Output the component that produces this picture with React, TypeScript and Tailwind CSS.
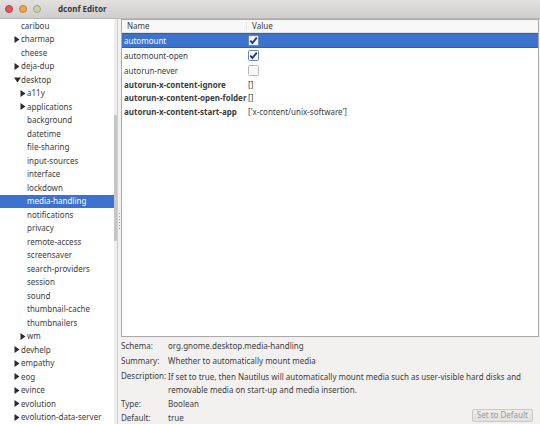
import React from "react"

type Node = { name: string; level: number; arrow?: "closed" | "open"; selected?: boolean }

const tree: Node[] = [
  { name: "caribou", level: 0 },
  { name: "charmap", level: 0, arrow: "closed" },
  { name: "cheese", level: 0 },
  { name: "deja-dup", level: 0, arrow: "closed" },
  { name: "desktop", level: 0, arrow: "open" },
  { name: "a11y", level: 1, arrow: "closed" },
  { name: "applications", level: 1, arrow: "closed" },
  { name: "background", level: 1 },
  { name: "datetime", level: 1 },
  { name: "file-sharing", level: 1 },
  { name: "input-sources", level: 1 },
  { name: "interface", level: 1 },
  { name: "lockdown", level: 1 },
  { name: "media-handling", level: 1, selected: true },
  { name: "notifications", level: 1 },
  { name: "privacy", level: 1 },
  { name: "remote-access", level: 1 },
  { name: "screensaver", level: 1 },
  { name: "search-providers", level: 1 },
  { name: "session", level: 1 },
  { name: "sound", level: 1 },
  { name: "thumbnail-cache", level: 1 },
  { name: "thumbnailers", level: 1 },
  { name: "wm", level: 1, arrow: "closed" },
  { name: "devhelp", level: 0, arrow: "closed" },
  { name: "empathy", level: 0, arrow: "closed" },
  { name: "eog", level: 0, arrow: "closed" },
  { name: "evince", level: 0, arrow: "closed" },
  { name: "evolution", level: 0, arrow: "closed" },
  { name: "evolution-data-server", level: 0, arrow: "closed" },
]

type Key = { name: string; bold?: boolean; value: React.ReactNode; tall?: boolean; selected?: boolean }

function Check({ checked, light }: { checked: boolean; light?: boolean }) {
  return (
    <svg width="11" height="11" viewBox="0 0 11 11" className="block">
      <rect x="0.5" y="0.5" width="10" height="10" rx="1" fill={light ? "#eef3fb" : "#f8f8f8"} stroke={checked ? "#6d86ad" : "#b9b9b9"} />
      {checked && <path d="M2.3 5.6 L4.4 8 L8.8 2.6" fill="none" stroke="#1f3d73" strokeWidth="1.9" />}
    </svg>
  )
}

const keys: Key[] = [
  { name: "automount", value: <Check checked light />, tall: true, selected: true },
  { name: "automount-open", value: <Check checked />, tall: true },
  { name: "autorun-never", value: <Check checked={false} />, tall: true },
  { name: "autorun-x-content-ignore", bold: true, value: "[]" },
  { name: "autorun-x-content-open-folder", bold: true, value: "[]" },
  { name: "autorun-x-content-start-app", bold: true, value: "['x-content/unix-software']" },
]

function Arrow({ kind }: { kind: "closed" | "open" }) {
  return kind === "closed" ? (
    <svg width="6" height="7" viewBox="0 0 6 7" className="block">
      <path d="M0.5 0 L5.5 3.5 L0.5 7 Z" fill="#2b2b2b" />
    </svg>
  ) : (
    <svg width="7" height="6" viewBox="0 0 7 6" className="block">
      <path d="M0 0.5 L7 0.5 L3.5 5.5 Z" fill="#2b2b2b" />
    </svg>
  )
}

export default function App() {
  return (
    <div
      className="w-[540px] h-[424px] overflow-hidden flex flex-col bg-[#f2f1f0] text-[#3c3c3c] text-[8px] leading-none"
      style={{ fontFamily: '"Noto Sans", "DejaVu Sans", sans-serif' }}
    >
      {/* title bar */}
      <div className="h-[19px] shrink-0 flex items-center bg-gradient-to-b from-[#e2e1df] to-[#cfcecc] border-b border-[#b8b7b5]">
        <div className="flex items-center gap-[6px] pl-[5px]">
          <span className="w-[8px] h-[8px] rounded-full bg-[#e2565f] border border-[#b2434a]" />
          <span className="w-[8px] h-[8px] rounded-full bg-[#f3a24a] border border-[#c8813a]" />
          <span className="w-[8px] h-[8px] rounded-full bg-[#c9d3a8] border border-[#9ba27f]" />
        </div>
        <span className="ml-[17px] font-bold text-[8px] text-[#3a3a3a]">dconf Editor</span>
      </div>

      <div className="flex-1 flex min-h-0">
        {/* schema tree */}
        <div className="w-[118px] shrink-0 flex bg-white border-r border-[#cfcecc]">
          <div className="flex-1 flex flex-col">
            {tree.map((n) => (
              <div
                key={n.name}
                className={
                  "h-[13.5px] shrink-0 flex items-center " +
                  (n.selected ? "bg-[#3d73cd] text-white" : "")
                }
                style={{ paddingLeft: 14 + n.level * 6 }}
              >
                <span className="w-[7px] shrink-0 flex items-center">
                  {n.arrow && <Arrow kind={n.arrow} />}
                </span>
                <span>{n.name}</span>
              </div>
            ))}
          </div>
          <div className="w-[3px] shrink-0 bg-[#ededed] flex flex-col">
            <div className="h-[96px]" />
            <div className="h-[126px] bg-[#c6c6c6] rounded-[1px]" />
          </div>
        </div>

        {/* pane handle */}
        <div className="w-[3px] shrink-0 flex flex-col items-center justify-center gap-[2px] pb-[2px]">
          {[0, 1, 2, 3, 4, 5].map((i) => (
            <span key={i} className="w-[1px] h-[1px] bg-[#9a9a9a]" />
          ))}
        </div>

        {/* key list + details */}
        <div className="flex-1 flex flex-col pr-[1px]">
          <div className="h-[318px] shrink-0 bg-white border border-[#a9a9a9] flex flex-col">
            <div className="h-[13px] shrink-0 flex items-center bg-[#f8f8f8] border-b border-[#e2e2e2]">
              <span className="w-[125px] pl-[5px] border-r border-[#e4e4e4]">Name</span>
              <span className="pl-[5px]">Value</span>
            </div>
            {keys.map((k) => (
              <div
                key={k.name}
                className={
                  (k.tall ? "h-[15px] " : "h-[13.5px] ") +
                  "shrink-0 flex items-center " +
                  (k.selected ? "bg-[#3d73cd] text-white border-y border-[#2e5fb3]" : "")
                }
              >
                <span className={"w-[125px] pl-[2px] " + (k.bold ? "font-bold" : "")}>{k.name}</span>
                <span className="pl-[1px]">{k.value}</span>
              </div>
            ))}
          </div>

          <div className="flex-1 grid grid-cols-[47px_1fr] content-start pt-[1px] pr-[6px]">
            <span className="h-[15px] flex items-center">Schema:</span>
            <span className="h-[15px] flex items-center">org.gnome.desktop.media-handling</span>
            <span className="h-[15px] flex items-center">Summary:</span>
            <span className="h-[15px] flex items-center">Whether to automatically mount media</span>
            <span className="pt-[4px]">Description:</span>
            <span className="pt-[4px] leading-[13px] -mt-[2.5px]">
              If set to true, then Nautilus will automatically mount media such as user-visible hard disks and
              removable media on start-up and media insertion.
            </span>
            <span className="h-[14px] flex items-center mt-[1px]">Type:</span>
            <span className="h-[14px] flex items-center mt-[1px]">Boolean</span>
            <span className="h-[15px] flex items-center">Default:</span>
            <span className="h-[15px] flex items-center justify-between">
              <span>true</span>
              <span className="h-[13px] px-[4px] flex items-center rounded-[2px] border border-[#c9c8c6] bg-gradient-to-b from-[#eeedeb] to-[#e2e1df] text-[#9a9a98] -translate-y-[3px]">
                Set to Default
              </span>
            </span>
          </div>
        </div>
      </div>
    </div>
  )
}
